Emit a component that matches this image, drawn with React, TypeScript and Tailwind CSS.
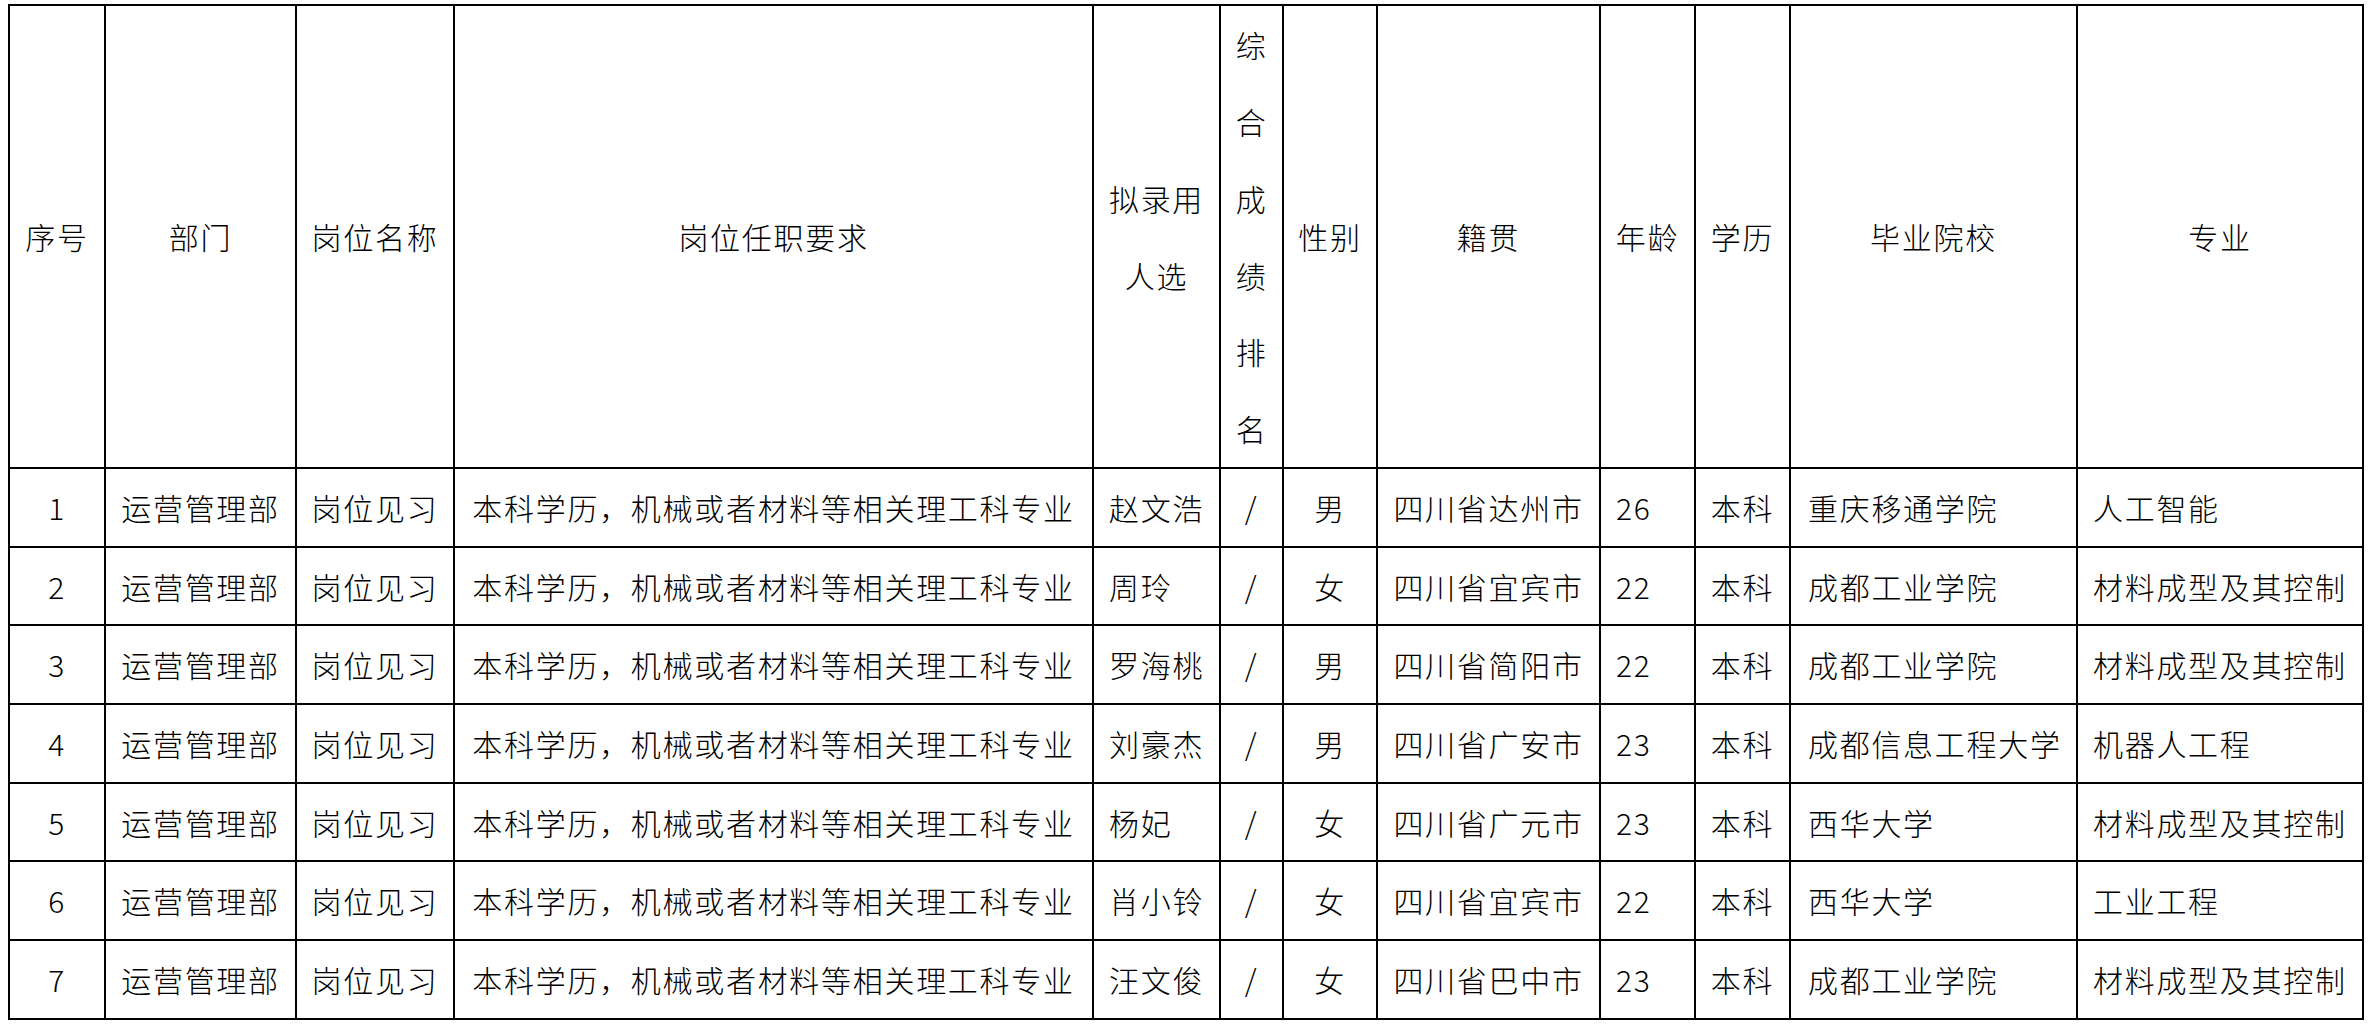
// 拟录用人员公示表
const headers = [
  '序号',
  '部门',
  '岗位名称',
  '岗位任职要求',
  '拟录用人选',
  '综合成绩排名',
  '性别',
  '籍贯',
  '年龄',
  '学历',
  '毕业院校',
  '专业',
]

const rows = [
  ['1', '运营管理部', '岗位见习', '本科学历，机械或者材料等相关理工科专业', '赵文浩', '/', '男', '四川省达州市', '26', '本科', '重庆移通学院', '人工智能'],
  ['2', '运营管理部', '岗位见习', '本科学历，机械或者材料等相关理工科专业', '周玲', '/', '女', '四川省宜宾市', '22', '本科', '成都工业学院', '材料成型及其控制'],
  ['3', '运营管理部', '岗位见习', '本科学历，机械或者材料等相关理工科专业', '罗海桃', '/', '男', '四川省简阳市', '22', '本科', '成都工业学院', '材料成型及其控制'],
  ['4', '运营管理部', '岗位见习', '本科学历，机械或者材料等相关理工科专业', '刘豪杰', '/', '男', '四川省广安市', '23', '本科', '成都信息工程大学', '机器人工程'],
  ['5', '运营管理部', '岗位见习', '本科学历，机械或者材料等相关理工科专业', '杨妃', '/', '女', '四川省广元市', '23', '本科', '西华大学', '材料成型及其控制'],
  ['6', '运营管理部', '岗位见习', '本科学历，机械或者材料等相关理工科专业', '肖小铃', '/', '女', '四川省宜宾市', '22', '本科', '西华大学', '工业工程'],
  ['7', '运营管理部', '岗位见习', '本科学历，机械或者材料等相关理工科专业', '汪文俊', '/', '女', '四川省巴中市', '23', '本科', '成都工业学院', '材料成型及其控制'],
]

// per-column alignment of the body cells
const bodyCell = [
  'justify-center',
  'justify-center',
  'justify-center',
  'justify-center',
  'justify-start pl-[15px]',
  'justify-center bg-[#f2f2f2]',
  'justify-center',
  'justify-center',
  'justify-start pl-[15px]',
  'justify-center',
  'justify-start pl-[17px]',
  'justify-start pl-[15px]',
]

export default function App() {
  return (
    <div className="min-h-screen bg-white pt-[4px] pl-[8px] text-black font-light font-['Noto_Sans_CJK_SC','Noto_Sans',sans-serif]">
      <div className="inline-grid grid-cols-[94px_189px_156px_637px_125px_61px_92px_221px_93px_93px_285px_284px] grid-rows-[461px_repeat(7,76.7px)] gap-[2px] bg-black p-[2px] text-[30px] tracking-[1.7px]">
        {headers.map((h, i) => (
          <div
            key={h}
            className={
              i === 5
                ? 'flex items-center justify-center bg-white px-0 text-center leading-[76.8px]'
                : 'flex items-center justify-center bg-white px-2 text-center leading-[77px]'
            }
          >
            <span>{h}</span>
          </div>
        ))}

        {rows.map((r) =>
          r.map((v, i) => (
            <div key={r[0] + '-' + i} className={'flex items-center whitespace-nowrap bg-white ' + bodyCell[i]}>
              {v}
            </div>
          )),
        )}
      </div>
    </div>
  )
}
